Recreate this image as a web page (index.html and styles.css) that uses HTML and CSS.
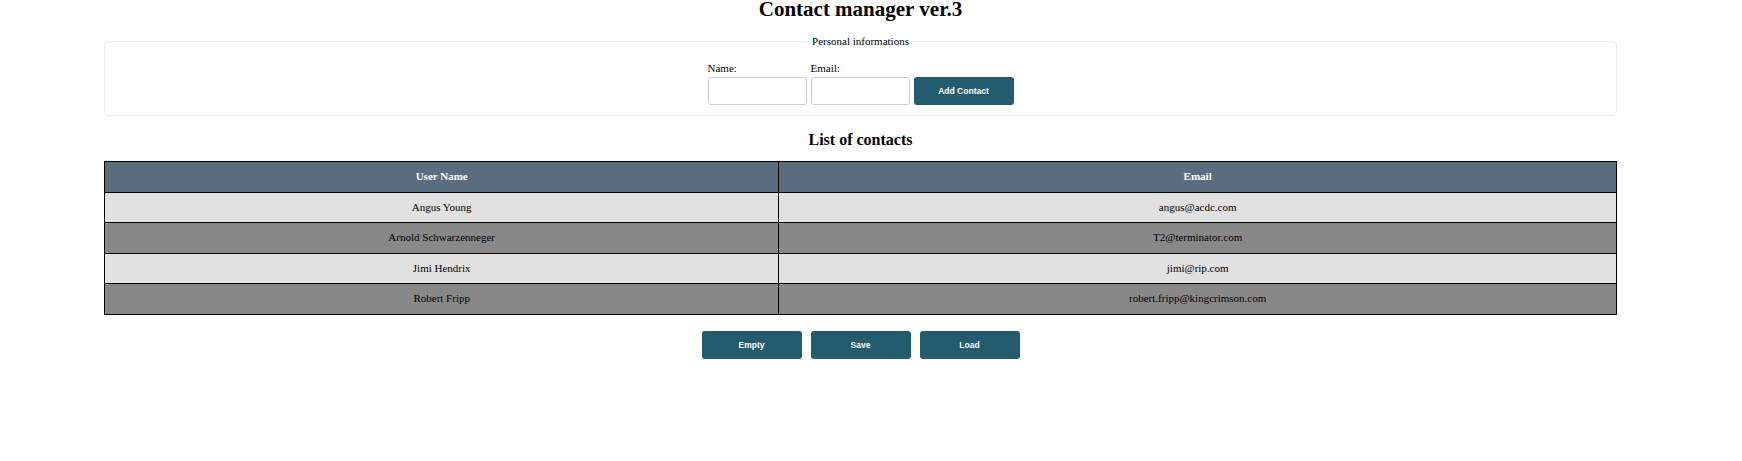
FILE: index.html
```html
<!DOCTYPE html>
<html>
<head>
<meta charset="utf-8">
<title>Contact manager ver.3</title>
<link rel="stylesheet" href="styles.css">
</head>
<body>
<div class="wrap">
  <h1 class="title">Contact manager ver.3</h1>
  <fieldset class="info">
    <legend class="info-legend">Personal informations</legend>
    <div class="form-row">
      <div class="field">
        <label class="field-label" for="name">Name:</label>
        <input class="field-input" id="name" type="text">
      </div>
      <div class="field">
        <label class="field-label" for="email">Email:</label>
        <input class="field-input" id="email" type="text">
      </div>
      <button class="btn">Add Contact</button>
    </div>
  </fieldset>
  <h2 class="subtitle">List of contacts</h2>
  <table class="contacts">
    <thead>
      <tr><th class="col-name">User Name</th><th class="col-email">Email</th></tr>
    </thead>
    <tbody>
      <tr class="row-light"><td>Angus Young</td><td>angus@acdc.com</td></tr>
      <tr class="row-dark"><td>Arnold Schwarzenneger</td><td>T2@terminator.com</td></tr>
      <tr class="row-light"><td>Jimi Hendrix</td><td>jimi@rip.com</td></tr>
      <tr class="row-dark"><td>Robert Fripp</td><td>robert.fripp@kingcrimson.com</td></tr>
    </tbody>
  </table>
  <div class="actions">
    <button class="btn">Empty</button>
    <button class="btn">Save</button>
    <button class="btn">Load</button>
  </div>
</div>
</body>
</html>
```

FILE: styles.css
```css
html, body {
  margin: 0;
  padding: 0;
  background: #ffffff;
}
body {
  font-family: "Liberation Serif", "Times New Roman", serif;
  color: #000;
}
.wrap {
  width: 1513px;
  margin-left: 104px;
}
.title {
  margin: -3px 0 0;
  font-size: 21px;
  line-height: 24px;
  font-weight: bold;
  text-align: center;
}
.info {
  margin: 14px 0 0;
  padding: 15px 10px 10px;
  border: 1px solid #ececec;
  border-radius: 5px;
}
.info-legend {
  margin: 0 auto;
  padding: 0 2px;
  font-size: 11px;
  line-height: 12px;
}
.form-row {
  display: flex;
  justify-content: center;
  align-items: flex-end;
  gap: 4px;
}
.field {
  display: flex;
  flex-direction: column;
}
.field-label {
  font-size: 11px;
  line-height: 13px;
  margin-bottom: 2px;
}
.field-input {
  box-sizing: border-box;
  width: 99px;
  height: 28px;
  margin: 0;
  border: 1px solid #cccccc;
  border-radius: 3px;
  background: #fff;
}
.btn {
  box-sizing: border-box;
  width: 100px;
  height: 28px;
  margin: 0;
  border: none;
  border-radius: 3px;
  background: #225c6e;
  color: #ffffff;
  font-family: "Liberation Sans", Arial, sans-serif;
  font-size: 8.5px;
  font-weight: bold;
}
.subtitle {
  margin: 15px 0 12px;
  font-size: 16px;
  line-height: 18px;
  text-align: center;
}
.contacts {
  width: 100%;
  border-collapse: collapse;
  border: 1px solid #000;
  font-size: 11px;
}
.contacts th,
.contacts td {
  border: 1px solid #000;
  padding: 0;
  line-height: 29.5px;
  text-align: center;
}
.contacts th {
  background: #596d7f;
  color: #ffffff;
  font-weight: bold;
}
.col-name {
  width: 44.6%;
}
.row-light td {
  background: #e1e1e1;
}
.row-dark td {
  background: #888888;
}
.actions {
  display: flex;
  justify-content: center;
  gap: 9px;
  margin-top: 16px;
}
```
